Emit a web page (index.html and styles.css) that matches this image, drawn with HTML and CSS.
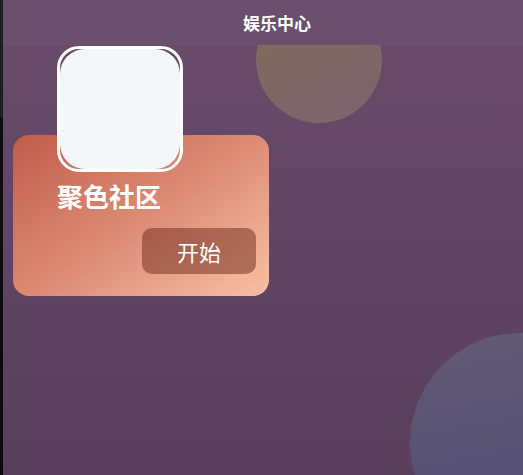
FILE: index.html
```html
<!DOCTYPE html>
<html lang="zh-CN">
<head>
  <meta charset="UTF-8" />
  <meta name="viewport" content="width=device-width, initial-scale=1.0"/>
  <title>娱乐中心</title>
  <link rel="stylesheet" href="styles.css">
</head>
<body>
  <div class="edge">
    <div class="edge-top"></div>
    <div class="edge-bottom"></div>
  </div>

  <div class="app">
    <div class="bubble bubble-gold"></div>
    <div class="bubble bubble-blue"></div>

    <header class="app-header">
      <h1>娱乐中心</h1>
    </header>

    <main class="content">
      <div class="game-card">
        <div class="game-icon">
          <div class="game-icon-img"></div>
        </div>
        <h2 class="game-title">聚色社区</h2>
        <button class="start-btn">开始</button>
      </div>
    </main>
  </div>
</body>
</html>
```

FILE: styles.css
```css
* {
  margin: 0;
  padding: 0;
  box-sizing: border-box;
  font-family: "Noto Sans CJK SC", "Noto Sans", sans-serif;
}

body {
  display: flex;
  height: 475px;
  overflow: hidden;
  background-color: #0e0a0e;
}

/* faixa escura na borda esquerda */
.edge {
  width: 3px;
  display: flex;
  flex-direction: column;
}

.edge-top {
  height: 118px;
  background-color: #1f1f1f;
}

.edge-bottom {
  flex: 1;
  background-color: #0e0a0e;
}

.app {
  flex: 1;
  position: relative;
  overflow: hidden;
  background: linear-gradient(180deg, #684c6a 0%, #5a3f5c 100%);
  color: #fff;
}

.bubble {
  position: absolute;
  border-radius: 50%;
}

.bubble-gold {
  left: 253px;
  top: -3px;
  width: 126px;
  height: 126px;
  background: linear-gradient(150deg, #7f6d58 0%, #7c6470 100%);
}

.bubble-blue {
  left: 407px;
  top: 333px;
  width: 220px;
  height: 220px;
  background: linear-gradient(170deg, #645a72 0%, #4b4a76 100%);
}

.app-header {
  position: relative;
  z-index: 2;
  height: 45px;
  display: flex;
  align-items: center;
  justify-content: center;
  padding-left: 28px;
  background-color: #6a4f6c;
  border-bottom: 1px solid #6e5370;
}

.app-header h1 {
  font-size: 17px;
  font-weight: bold;
}

.content {
  position: relative;
  z-index: 1;
  padding: 0 10px;
}

.game-card {
  width: 256px;
  height: 161px;
  margin-top: 90px;
  padding-left: 44px;
  display: flex;
  flex-direction: column;
  border-radius: 16px;
  background: linear-gradient(145deg, #c05d49 0%, #dc8a74 50%, #f8c0a6 100%);
}

.game-icon {
  width: 126px;
  height: 126px;
  margin-top: -89px;
  border: 3px solid #fff;
  border-radius: 22px;
}

/* raio maior que o da borda: deixa o fundo aparecer nos cantos */
.game-icon-img {
  width: 100%;
  height: 100%;
  border-radius: 25px;
  background-color: #f3f7fa;
}

.game-title {
  margin-top: 9px;
  font-size: 26px;
  line-height: 30px;
  font-weight: bold;
}

.start-btn {
  align-self: flex-end;
  margin-top: 17px;
  margin-right: 13px;
  width: 114px;
  height: 46px;
  border: none;
  border-radius: 10px;
  background-color: rgba(105, 35, 20, 0.48);
  color: #fff;
  font-size: 22px;
  cursor: pointer;
}
```
